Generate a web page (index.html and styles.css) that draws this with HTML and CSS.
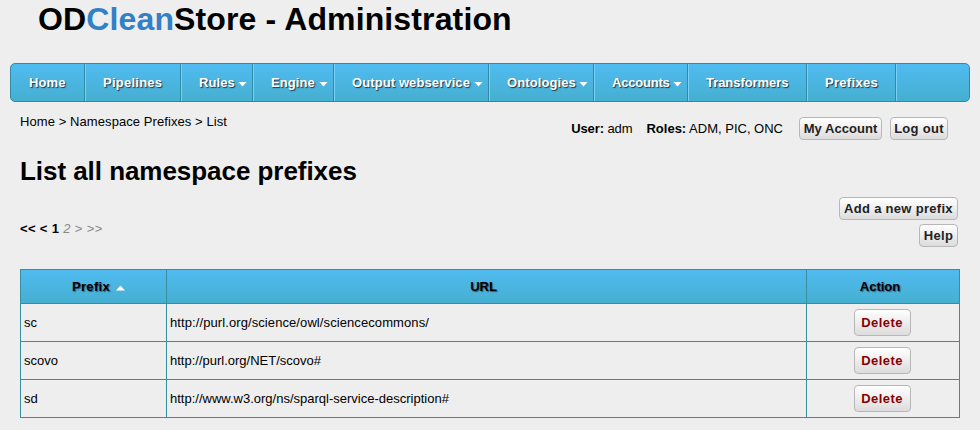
FILE: index.html
```html
<!DOCTYPE html>
<html lang="en">
<head>
<meta charset="utf-8">
<title>ODCleanStore - Administration</title>
<link rel="stylesheet" href="styles.css">
</head>
<body>
<header class="site-title">OD<span class="accent">Clean</span>Store - Administration</header>
<nav class="menu">
  <a class="home">Home</a>
  <a class="pipelines">Pipelines</a>
  <a class="rules">Rules<i class="down"></i></a>
  <a class="engine">Engine<i class="down"></i></a>
  <a class="output">Output webservice<i class="down"></i></a>
  <a class="ontologies">Ontologies<i class="down"></i></a>
  <a class="accounts">Accounts<i class="down"></i></a>
  <a class="transformers">Transformers</a>
  <a class="prefixes">Prefixes</a>
  <span class="rest"></span>
</nav>
<div class="info">
  <div class="crumbs">Home &gt; Namespace Prefixes &gt; List</div>
  <div class="user">
    <span class="name"><b>User:</b> adm</span>
    <span class="roles"><b>Roles:</b> ADM, PIC, ONC</span>
    <a class="btn account">My Account</a>
    <a class="btn logout">Log out</a>
  </div>
</div>
<main>
  <h1>List all namespace prefixes</h1>
  <div class="tools">
    <div class="pager"><b>&lt;&lt; &lt; 1</b> <span class="off"><em>2</em> &gt; &gt;&gt;</span></div>
    <div class="actions">
      <a class="btn add">Add a new prefix</a>
      <a class="btn help">Help</a>
    </div>
  </div>
  <table>
    <colgroup><col class="c1"><col class="c2"><col class="c3"></colgroup>
    <thead><tr><th class="sorted">Prefix<i class="up"></i></th><th>URL</th><th>Action</th></tr></thead>
    <tbody>
      <tr><td>sc</td><td class="url-long">http://purl.org/science/owl/sciencecommons/</td><td class="act"><a class="btn delete">Delete</a></td></tr>
      <tr><td>scovo</td><td>http://purl.org/NET/scovo#</td><td class="act"><a class="btn delete">Delete</a></td></tr>
      <tr><td>sd</td><td>http://www.w3.org/ns/sparql-service-description#</td><td class="act"><a class="btn delete">Delete</a></td></tr>
    </tbody>
  </table>
</main>
</body>
</html>
```
FILE: styles.css
```css
* { box-sizing: border-box; }
body {
  margin: 0;
  height: 430px;
  overflow: hidden;
  background: #eee;
  color: #000;
  font: 13px/16px "Liberation Sans", Arial, sans-serif;
  white-space: nowrap;
}
.site-title {
  height: 63px;
  padding-left: 38px;
  font-size: 32px;
  line-height: 38px;
  font-weight: bold;
  letter-spacing: 0.13px;
}
.accent { color: #3280c8; }
.menu {
  display: flex;
  height: 39px;
  margin: 0 10px;
  border: 1px solid #3089a5;
  border-radius: 5px;
  background: linear-gradient(#50bbf0, #45afd0);
  overflow: hidden;
}
.menu a {
  display: flex;
  align-items: center;
  padding: 0 0 0 17px;
  border-left: 1px solid #7ad0f8;
  border-right: 1px solid #3089a5;
  color: #fff;
  font-weight: bold;
  letter-spacing: 0.1px;
  text-shadow: 1px 1px 1px #234;
}
.menu .home { width: 74px; border-left: 0; padding-left: 18px; }
.menu .pipelines { width: 96px; letter-spacing: 0.25px; }
.menu .rules { width: 72px; }
.menu .engine { width: 81px; }
.menu .output { width: 155px; }
.menu .ontologies { width: 105px; }
.menu .accounts { width: 94px; letter-spacing: -0.2px; }
.menu .transformers { width: 119px; letter-spacing: -0.05px; }
.menu .prefixes { width: 89px; letter-spacing: 0.3px; }
.rest { border-left: 1px solid #7ad0f8; }
.down {
  width: 9px;
  height: 5px;
  margin: 3px 5px 0 auto;
  background: #fff;
  clip-path: polygon(0 0, 100% 0, 50% 100%);
}
.info {
  display: flex;
  justify-content: space-between;
  height: 51px;
  padding: 12px 32px 0 20px;
}
.crumbs { letter-spacing: 0.08px; }
.user { display: flex; align-items: center; height: 23px; margin-top: 3px; }
.name { margin-right: 14px; letter-spacing: -0.1px; }
.roles { margin-right: 16px; }
.btn {
  display: flex;
  align-items: center;
  justify-content: center;
  height: 23px;
  border: 1px solid #b7b7b7;
  border-radius: 4px;
  background: linear-gradient(#fff, #dcdcdc);
  color: #222;
  font-weight: bold;
  letter-spacing: 0.3px;
}
.account { width: 83px; margin-right: 8px; letter-spacing: 0.05px; }
.logout { width: 58px; }
main { padding: 0 20px; }
h1 { margin: 0; font-size: 26px; line-height: 36px; height: 44px; letter-spacing: -0.05px; }
.tools { display: flex; justify-content: space-between; height: 72px; padding-right: 2px; }
.pager { padding-top: 24px; letter-spacing: 0.35px; }
.off { color: #888; }
.actions { display: flex; flex-direction: column; align-items: flex-end; gap: 4px; }
.add { width: 119px; }
.help { width: 39px; }
table { width: 940px; table-layout: fixed; border-collapse: collapse; }
.c1 { width: 146px; }
.c2 { width: 640px; }
th, td { border: 1px solid #368ea5; }
thead tr { height: 34px; background: linear-gradient(#50bbf0, #45afd0); }
th { padding: 0 6px 0 0; text-shadow: 1px 1px 1px #357; }
.sorted { padding: 0 0 0 10px; letter-spacing: 0.3px; }
td { height: 38px; padding: 0 3px; }
.url-long { letter-spacing: 0.09px; }
.up {
  display: inline-block;
  width: 9px;
  height: 5px;
  margin-left: 6px;
  background: #fff;
  clip-path: polygon(50% 0, 100% 100%, 0 100%);
}
.act { padding: 0 4px 0 2px; }
.delete { width: 57px; height: 27px; margin: 0 auto; color: #8b0000; letter-spacing: 0.45px; }
```
